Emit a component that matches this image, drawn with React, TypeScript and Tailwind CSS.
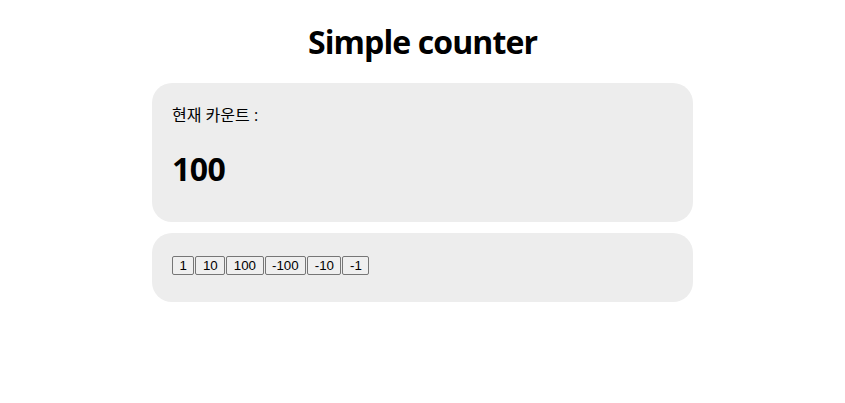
import React, { useState } from 'react'

const steps = [1, 10, 100, -100, -10, -1]

const App = () => {
    const [count, setCount] = useState(100)

    return (
        <div className="min-h-[403px] bg-white text-black font-['Open_Sans','Noto_Sans_CJK_KR',sans-serif]">
            <div className="w-[541px] mx-auto pt-[22px]">
                <h1 className="text-center text-[32px] leading-[40px] font-bold tracking-[-0.9px]">Simple counter</h1>
                <div className="mt-[21px] h-[139px] rounded-[20px] bg-[#ededed] px-[20px] pt-[22px]">
                    <p className="text-[16px] leading-[20px]">현재 카운트 :</p>
                    <p className="mt-[24px] text-[32px] leading-[40px] font-bold tracking-[-0.5px]">{count}</p>
                </div>
                <div className="mt-[11px] h-[69px] rounded-[20px] bg-[#ededed] px-[20px] pt-[23px]">
                    <div className="flex gap-px">
                        {steps.map((s) => (
                            <button
                                key={s}
                                onClick={() => setCount(count + s)}
                                className="h-[19px] px-[6.5px] border border-[#767676] rounded-[2px] bg-[#efefef] text-[13.33px] leading-[15px] font-['Liberation_Sans',Arial,sans-serif]"
                            >
                                {s}
                            </button>
                        ))}
                    </div>
                </div>
            </div>
        </div>
    )
}

export default App
